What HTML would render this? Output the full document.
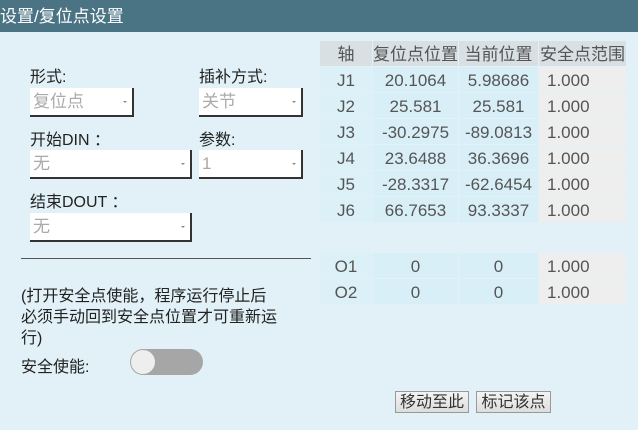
<!DOCTYPE html><html><head><meta charset="utf-8"><style>
body{margin:0;width:638px;height:430px;background:#e1f1f7;font-family:"Liberation Sans","Noto Sans CJK SC",sans-serif;position:relative;overflow:hidden;color:#222}
.a{position:absolute}
.t{font-size:16px;white-space:nowrap}
.dd{position:absolute;background:#fff;height:29px;border-right:2px solid #333;border-bottom:2px solid #333;box-sizing:border-box;color:#aaa;font-size:17px;line-height:28px;padding-left:3px}
.dd:after{content:"";position:absolute;right:5px;top:13px;border-left:2px solid transparent;border-right:2px solid transparent;border-top:2px solid #888}
.c{position:absolute;height:25px;line-height:27px;text-align:center;font-size:17px;color:#555}
.btn{position:absolute;top:391px;height:22px;border:1px solid #999;background:linear-gradient(#f4f4f4,#ddd);font-size:16px;line-height:21px;color:#333;box-sizing:border-box;text-align:center}
</style></head><body>
<div class="a" style="left:0;top:0;width:638px;height:32px;background:#4a7383;color:#fff;font-size:17px;line-height:33px">设置/复位点设置</div>
<div class="a t" style="left:30px;top:63px">形式:</div>
<div class="a t" style="left:199px;top:63px">插补方式:</div>
<div class="dd" style="left:30px;top:88px;width:104px">复位点</div>
<div class="dd" style="left:199px;top:88px;width:104px">关节</div>
<div class="a t" style="left:30px;top:126px">开始DIN ：</div>
<div class="a t" style="left:199px;top:126px">参数:</div>
<div class="dd" style="left:30px;top:150px;width:162px">无</div>
<div class="dd" style="left:199px;top:150px;width:104px">1</div>
<div class="a t" style="left:30px;top:188px">结束DOUT ：</div>
<div class="dd" style="left:30px;top:213px;width:162px">无</div>
<div class="a" style="left:21px;top:258px;width:290px;height:1px;background:#555"></div>
<div class="a" style="left:21px;top:286px;font-size:16px;line-height:21px;width:300px">(打开安全点使能，程序运行停止后<br>必须手动回到安全点位置才可重新运<br>行)</div>
<div class="a t" style="left:21px;top:353px">安全使能:</div>
<div class="a" style="left:130px;top:349px;width:73px;height:26px;border-radius:13px;background:#a6a6a6"></div>
<div class="a" style="left:131px;top:350px;width:24px;height:24px;border-radius:12px;background:#eee"></div>
<div class="btn" style="left:395px;width:74px">移动至此</div>
<div class="btn" style="left:476px;width:75px">标记该点</div>
<div id="tb"></div>
<script>
var cols=[[320,52,'#dcf0f7'],[373,85,'#d9eff7'],[459,79,'#d9eff7'],[539,87,'#eeeeee']];
var rows=[["轴","复位点位置","当前位置","安全点范围"],["J1","20.1064","5.98686","1.000"],["J2","25.581","25.581","1.000"],["J3","-30.2975","-89.0813","1.000"],["J4","23.6488","36.3696","1.000"],["J5","-28.3317","-62.6454","1.000"],["J6","66.7653","93.3337","1.000"]];
var tops=[41,67,93,119,145,171,197,253,279];
rows.push(["O1","0","0","1.000"],["O2","0","0","1.000"]);
var h='';
rows.forEach(function(r,i){r.forEach(function(v,j){var bg=i==0?'#d8e0e3':cols[j][2];var al=(j==3&&i>0)?'text-align:left;padding-left:8px;width:'+(cols[j][1]-8)+'px':'width:'+cols[j][1]+'px';
h+='<div class="c" style="left:'+cols[j][0]+'px;top:'+tops[i]+'px;background:'+bg+';'+al+'">'+v+'</div>';});});
document.getElementById('tb').innerHTML=h;
</script>
</body></html>
